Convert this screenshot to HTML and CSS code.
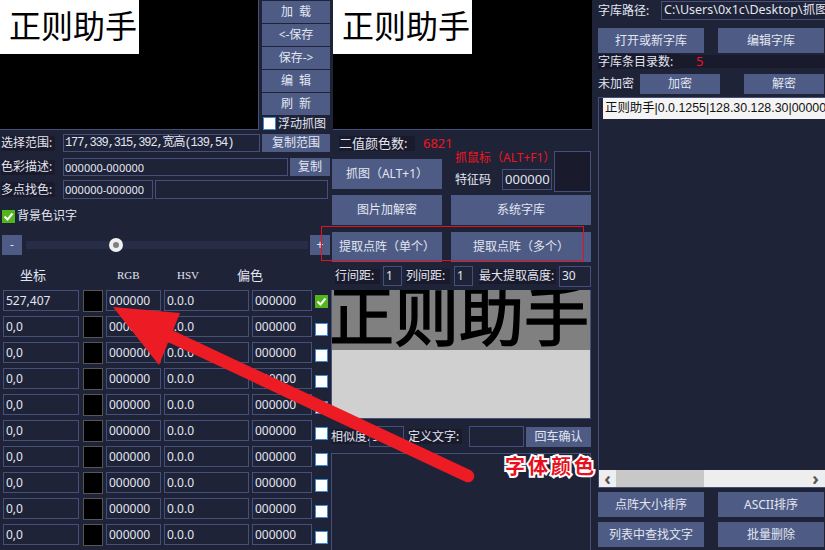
FILE: index.html
```html
<!DOCTYPE html>
<html lang="zh-CN">
<head>
    <meta charset="UTF-8">
    <title>正则助手</title>
    <link rel="stylesheet" href="styles.css">
</head>
<body>
<div class="app">

    <!-- Left column: capture, colour list -->
    <div class="col-left">
        <div class="capture">
            <div class="preview preview-left"><div class="sample">正则助手</div></div>
            <div class="side-btns">
                <div class="btn side-btn">加 &nbsp;载</div>
                <div class="btn side-btn">&lt;-保存</div>
                <div class="btn side-btn">保存-&gt;</div>
                <div class="btn side-btn">编 &nbsp;辑</div>
                <div class="btn side-btn">刷 &nbsp;新</div>
                <div class="float-check"><span class="check"></span><span>浮动抓图</span></div>
            </div>
        </div>

        <div class="row row-range">
            <span class="label label-desc">选择范围:</span>
            <span class="field field-range">177,339,315,392,宽高(139,54)</span>
            <div class="btn btn-copy-range">复制范围</div>
        </div>
        <div class="row row-color">
            <span class="label label-desc">色彩描述:</span>
            <span class="field field-color">000000-000000</span>
            <div class="btn btn-copy">复制</div>
        </div>
        <div class="row row-multi">
            <span class="label label-desc">多点找色:</span>
            <span class="field field-multi">000000-000000</span>
            <span class="field field-multi-extra"></span>
        </div>
        <div class="row row-bg">
            <span class="check check-on"><svg viewBox="0 0 13 13" width="13" height="13"><path d="M2.5 6.5 5.5 9.5 10.5 3.5" fill="none" stroke="#fff" stroke-width="2"/></svg></span>
            <span class="label-plain">背景色识字</span>
        </div>
        <div class="row row-slider">
            <div class="btn btn-step">-</div>
            <div class="track"><span class="thumb"></span></div>
            <div class="btn btn-step">+</div>
        </div>

        <div class="color-grid color-head">
            <span class="head head-pos">坐标</span>
            <span></span>
            <span class="head head-serif">RGB</span>
            <span class="head head-serif head-hsv">HSV</span>
            <span class="head head-off">偏色</span>
            <span></span>
        </div>
        <div class="color-grid color-rows">
            <span class="field">527,407</span><span class="swatch"></span><span class="field">000000</span><span class="field">0.0.0</span><span class="field">000000</span><span class="check check-on check-first"><svg viewBox="0 0 13 13" width="13" height="13"><path d="M2.5 6.5 5.5 9.5 10.5 3.5" fill="none" stroke="#fff" stroke-width="2"/></svg></span>
            <span class="field">0,0</span><span class="swatch"></span><span class="field">000000</span><span class="field">0.0.0</span><span class="field">000000</span><span class="check check-row"></span>
            <span class="field">0,0</span><span class="swatch"></span><span class="field">000000</span><span class="field">0.0.0</span><span class="field">000000</span><span class="check check-row"></span>
            <span class="field">0,0</span><span class="swatch"></span><span class="field">000000</span><span class="field">0.0.0</span><span class="field">000000</span><span class="check check-row"></span>
            <span class="field">0,0</span><span class="swatch"></span><span class="field">000000</span><span class="field">0.0.0</span><span class="field">000000</span><span class="check check-row"></span>
            <span class="field">0,0</span><span class="swatch"></span><span class="field">000000</span><span class="field">0.0.0</span><span class="field">000000</span><span class="check check-row"></span>
            <span class="field">0,0</span><span class="swatch"></span><span class="field">000000</span><span class="field">0.0.0</span><span class="field">000000</span><span class="check check-row"></span>
            <span class="field">0,0</span><span class="swatch"></span><span class="field">000000</span><span class="field">0.0.0</span><span class="field">000000</span><span class="check check-row"></span>
            <span class="field">0,0</span><span class="swatch"></span><span class="field">000000</span><span class="field">0.0.0</span><span class="field">000000</span><span class="check check-row"></span>
            <span class="field">0,0</span><span class="swatch"></span><span class="field">000000</span><span class="field">0.0.0</span><span class="field">000000</span><span class="check check-row"></span>
        </div>
    </div>

    <!-- Middle column: binarise, dot matrix -->
    <div class="col-mid">
        <div class="preview preview-mid"><div class="sample">正则助手</div></div>

        <div class="row row-count">
            <span class="label label-count">二值颜色数:</span>
            <span class="red count">6821</span>
        </div>
        <div class="row row-grab">
            <div class="btn btn-grab">抓图（ALT+1）</div>
            <div class="grab-info">
                <div class="red grab-title">抓鼠标（ALT+F1）</div>
                <div class="row grab-code">
                    <span class="label-plain">特征码</span>
                    <span class="field field-code">000000</span>
                </div>
            </div>
            <div class="grab-box"></div>
        </div>
        <div class="row row-btns">
            <div class="btn btn-wide-l">图片加解密</div>
            <div class="btn btn-wide-r">系统字库</div>
        </div>
        <div class="row row-btns row-extract">
            <div class="btn btn-wide-l">提取点阵（单个）</div>
            <div class="btn btn-wide-r">提取点阵（多个）</div>
        </div>
        <div class="row row-spacing">
            <span class="label label-line">行间距:</span>
            <span class="field field-small">1</span>
            <span class="label label-col">列间距:</span>
            <span class="field field-small">1</span>
            <span class="label label-max">最大提取高度:</span>
            <span class="field field-max">30</span>
        </div>
        <div class="matrix">
            <div class="matrix-top"><span class="matrix-text">正则助手</span></div>
        </div>
        <div class="row row-define">
            <span class="label label-sim">相似度:</span>
            <span class="field field-sim">90</span>
            <span class="label label-def">定义文字:</span>
            <span class="field field-def"></span>
            <div class="btn btn-enter">回车确认</div>
        </div>
        <div class="result-box"></div>
    </div>

    <!-- Right column: font library -->
    <div class="col-right">
        <div class="row row-path">
            <span class="label-plain path-label">字库路径:</span>
            <span class="field field-path">C:\Users\0x1c\Desktop\抓图</span>
        </div>
        <div class="row lib-btns lib-btns-top">
            <div class="btn btn-lib">打开或新字库</div>
            <div class="btn btn-lib">编辑字库</div>
        </div>
        <div class="row row-entries">
            <span class="label entries-label">字库条目录数:</span>
            <span class="red entries-num">5</span>
        </div>
        <div class="row row-encrypt">
            <span class="label-plain enc-label">未加密</span>
            <div class="btn btn-enc">加密</div>
            <div class="btn btn-enc btn-dec">解密</div>
        </div>
        <div class="lib-list">
            <div class="lib-rows">
                <div class="lib-row">正则助手|0.0.1255|128.30.128.30|000000</div>
            </div>
            <div class="scrollbar">
                <span class="scroll-arrow">‹</span>
                <span class="scroll-thumb"></span>
                <span class="scroll-arrow scroll-next">›</span>
            </div>
        </div>
        <div class="row lib-btns lib-btns-sort">
            <div class="btn btn-lib">点阵大小排序</div>
            <div class="btn btn-lib">ASCII排序</div>
        </div>
        <div class="row lib-btns lib-btns-last">
            <div class="btn btn-lib">列表中查找文字</div>
            <div class="btn btn-lib">批量删除</div>
        </div>
    </div>
</div>

<!-- Annotations drawn on top of the screenshot -->
<div class="mark-box"></div>
<svg class="mark-arrow" viewBox="0 0 825 550" width="825" height="550">
    <path d="M155 329 468 476" fill="none" stroke="#ed1c24" stroke-width="12.5" stroke-linecap="round"/>
    <polygon points="113,307 180,313 159,365" fill="#ed1c24"/>
</svg>
<div class="mark-text">字体颜色</div>
</body>
</html>
```

FILE: styles.css
```css
/* General */
html, body {
    margin: 0;
    padding: 0;
}

body {
    width: 825px;
    height: 550px;
    overflow: hidden;
    position: relative;
    background-color: #1e2338;
    color: #e3e6f2;
    font-family: "Noto Sans", "Noto Sans CJK SC", sans-serif;
    font-size: 12px;
    line-height: 1;
}

.app {
    display: grid;
    grid-template-columns: 331px 262px 232px;
    height: 550px;
}

.col-left, .col-mid, .col-right {
    min-width: 0;
    overflow: hidden;
}

.row {
    display: flex;
    align-items: center;
}

.red {
    color: #f0141e;
}

.btn {
    display: flex;
    align-items: center;
    justify-content: center;
    flex: none;
    background-color: #4e5c85;
    color: #e3e6f2;
    white-space: nowrap;
}

.field {
    display: flex;
    align-items: center;
    box-sizing: border-box;
    flex: none;
    height: 21px;
    padding-left: 2px;
    border: 1px solid #45507a;
    white-space: nowrap;
    overflow: hidden;
}

.label {
    display: flex;
    align-items: center;
    flex: none;
    height: 15px;
    background-color: #191a2b;
    white-space: nowrap;
}

.label-plain {
    flex: none;
    white-space: nowrap;
}

.check {
    display: block;
    box-sizing: border-box;
    flex: none;
    width: 13px;
    height: 13px;
    background-color: #fff;
    border: 1px solid #3f8ad0;
}

.check-on {
    background-color: #52b51c;
    border: none;
}

.check-on svg {
    display: block;
}

/* Capture previews */
.capture {
    display: flex;
    height: 130px;
}

.preview {
    background-color: #000;
    box-sizing: border-box;
}

.preview-left {
    width: 259px;
    height: 130px;
    border-right: 1px solid #45507a;
    border-bottom: 1px solid #45507a;
}

.preview-mid {
    width: 259px;
    height: 130px;
    margin-left: 2px;
    border-bottom: 1px solid #45507a;
}

.sample {
    box-sizing: border-box;
    width: 139px;
    height: 54px;
    padding-left: 9px;
    background-color: #fff;
    color: #000;
    font-size: 32px;
    line-height: 52px;
    white-space: nowrap;
    overflow: hidden;
}

.side-btns {
    display: flex;
    flex-direction: column;
    gap: 1px;
    width: 68px;
    margin-left: 3px;
    padding-top: 1px;
}

.side-btn {
    height: 22px;
}

.float-check {
    display: flex;
    align-items: center;
    gap: 2px;
    height: 14px;
    margin-top: 1px;
    margin-left: 1px;
    white-space: nowrap;
}

/* Left rows */
.row-range {
    height: 18px;
    margin-top: 4px;
    margin-left: 1px;
}

.label-desc {
    width: 54px;
    margin-right: 8px;
}

.field-range {
    width: 197px;
    height: 18px;
    padding-left: 1px;
    font-family: "Liberation Mono", "Noto Sans CJK SC", monospace;
    font-size: 12px;
    letter-spacing: -1.1px;
}

.btn-copy-range {
    width: 68px;
    height: 18px;
    margin-left: 2px;
}

.row-color {
    height: 18px;
    margin-top: 6px;
    margin-left: 1px;
}

.field-color {
    width: 225px;
    height: 18px;
    padding-left: 1px;
    font-size: 11px;
}

.btn-copy {
    width: 40px;
    height: 18px;
    margin-left: 2px;
}

.row-multi {
    height: 19px;
    margin-top: 4px;
    margin-left: 1px;
}

.field-multi {
    width: 90px;
    height: 19px;
    padding-left: 1px;
    font-size: 11px;
}

.field-multi-extra {
    width: 173px;
    height: 19px;
    margin-left: 2px;
}

.row-bg {
    gap: 2px;
    height: 14px;
    margin-top: 10px;
    margin-left: 2px;
}

.row-slider {
    height: 20px;
    margin-top: 12px;
    margin-left: 2px;
}

.btn-step {
    width: 20px;
    height: 20px;
}

.track {
    position: relative;
    width: 282px;
    height: 8px;
    margin: 0 2px 0 4px;
    background-color: #272c47;
}

.thumb {
    position: absolute;
    left: 83px;
    top: -3px;
    box-sizing: border-box;
    width: 14px;
    height: 14px;
    border: 4px solid #f0f0f0;
    border-radius: 50%;
    background-color: #808080;
}

/* Colour list */
.color-grid {
    display: grid;
    grid-template-columns: 76px 21px 55px 85px 60px 13px;
    column-gap: 3px;
    margin-left: 3px;
}

.color-head {
    height: 14px;
    margin-top: 13px;
    align-items: center;
}

.head {
    font-size: 13px;
    white-space: nowrap;
}

.head-pos {
    padding-left: 17px;
}

.head-serif {
    padding-left: 11px;
    font-family: "Liberation Serif", serif;
    font-size: 11px;
}

.head-hsv {
    padding-left: 13px;
}

.head-off {
    margin-left: -15px;
}

.color-rows {
    grid-auto-rows: 22px;
    row-gap: 4px;
    margin-top: 8px;
    align-items: start;
}

.swatch {
    box-sizing: border-box;
    height: 22px;
    margin-left: 1px;
    background-color: #000;
    border: 1px solid #555;
}

.check-first {
    margin-top: 5px;
}

.check-row {
    margin-top: 7px;
}

/* Middle column */
.row-count {
    height: 15px;
    margin-top: 6px;
    margin-left: 8px;
}

.label-count {
    width: 76px;
    font-size: 13px;
}

.count {
    margin-left: 8px;
    font-size: 13px;
}

.row-grab {
    align-items: flex-start;
    height: 41px;
    margin-top: 0;
    margin-left: 1px;
}

.btn-grab {
    width: 110px;
    height: 30px;
    margin-top: 8px;
}

.grab-info {
    width: 99px;
    margin-left: 13px;
}

.grab-title {
    height: 14px;
    margin-top: 1px;
    white-space: nowrap;
}

.grab-code {
    margin-top: 3px;
}

.field-code {
    width: 50px;
    margin-left: 11px;
    font-size: 13px;
}

.grab-box {
    box-sizing: border-box;
    width: 37px;
    height: 41px;
    background-color: #191a2b;
    border: 1px solid #45507a;
}

.row-btns {
    height: 30px;
    margin-top: 3px;
    margin-left: 1px;
}

.row-extract {
    margin-top: 7px;
}

.btn-wide-l {
    width: 110px;
    height: 30px;
}

.btn-wide-r {
    width: 140px;
    height: 30px;
    margin-left: 9px;
}

.row-spacing {
    height: 22px;
    margin-top: 3px;
    margin-left: 4px;
}

.field-small {
    width: 19px;
    height: 20px;
}

.label-line {
    width: 45px;
    margin-right: 3px;
}

.label-col {
    width: 44px;
    margin: 0 4px 0 4px;
}

.label-max {
    width: 77px;
    margin: 0 3px 0 6px;
}

.field-max {
    width: 32px;
    height: 21px;
}

.matrix {
    box-sizing: border-box;
    width: 260px;
    height: 129px;
    margin-top: 3px;
    background-color: #cfd0cf;
    border: 1px solid #45507a;
    border-top: none;
}

.matrix-top {
    height: 60px;
    background-color: #808080;
    overflow: hidden;
}

.matrix-text {
    display: block;
    margin-left: -3px;
    color: #000;
    font-size: 65px;
    line-height: 50px;
    white-space: nowrap;
    -webkit-text-stroke: 1.5px #000;
}

.row-define {
    height: 21px;
    margin-top: 7px;
}

.label-sim {
    width: 37px;
}

.field-sim {
    width: 35px;
    margin-left: 1px;
}

.label-def {
    width: 54px;
    margin: 0 7px 0 4px;
}

.field-def {
    width: 55px;
}

.btn-enter {
    width: 65px;
    height: 20px;
    margin-left: 2px;
}

.result-box {
    box-sizing: border-box;
    width: 260px;
    height: 100px;
    margin-top: 6px;
    border: 1px solid #45507a;
}

/* Right column */
.col-right {
    padding-left: 5px;
}

.row-path {
    height: 19px;
    margin-top: 1px;
}

.path-label {
    width: 63px;
}

.field-path {
    width: 170px;
    height: 19px;
    font-size: 12.5px;
}

.lib-btns {
    gap: 14px;
}

.lib-btns-top {
    margin-top: 8px;
}

.btn-lib {
    width: 106px;
    height: 25px;
}

.row-entries {
    height: 13px;
    margin-top: 2px;
    background-color: #191a2b;
}

.entries-label {
    width: 82px;
}

.entries-num {
    margin-left: 16px;
    font-size: 13px;
}

.row-encrypt {
    height: 20px;
    margin-top: 6px;
}

.enc-label {
    width: 42px;
}

.btn-enc {
    width: 80px;
    height: 20px;
}

.btn-dec {
    margin-left: 24px;
}

.lib-list {
    display: flex;
    flex-direction: column;
    box-sizing: border-box;
    height: 391px;
    margin-top: 3px;
    border: 1px solid #45507a;
    border-right: none;
}

.lib-rows {
    flex: 1;
    padding-left: 4px;
}

.lib-row {
    height: 21px;
    padding-left: 2px;
    line-height: 21px;
    background-color: #f4f4f4;
    color: #111;
    font-family: "Liberation Sans", "Noto Sans CJK SC", sans-serif;
    font-size: 12.4px;
    white-space: nowrap;
    overflow: hidden;
}

.scrollbar {
    display: flex;
    align-items: center;
    height: 17px;
    background-color: #eeeeee;
}

.scroll-arrow {
    width: 17px;
    color: #555;
    font-size: 18px;
    font-weight: 700;
    line-height: 15px;
    text-align: center;
}

.scroll-thumb {
    width: 88px;
    height: 17px;
    background-color: #c8c8c8;
}

.scroll-next {
    margin-left: auto;
    margin-right: 1px;
}

.lib-btns-sort {
    margin-top: 4px;
}

.lib-btns-last {
    margin-top: 5px;
}

/* Annotations */
.mark-box {
    position: absolute;
    left: 321px;
    top: 226px;
    width: 261px;
    height: 33px;
    border: 1px solid #e8101c;
}

.mark-arrow {
    position: absolute;
    left: 0;
    top: 0;
}

.mark-text {
    position: absolute;
    left: 505px;
    top: 455px;
    color: #e8101c;
    font-size: 20px;
    font-weight: 700;
    letter-spacing: 3px;
    line-height: 24px;
    white-space: nowrap;
    -webkit-text-stroke: 4px #fff;
    paint-order: stroke fill;
}
```
